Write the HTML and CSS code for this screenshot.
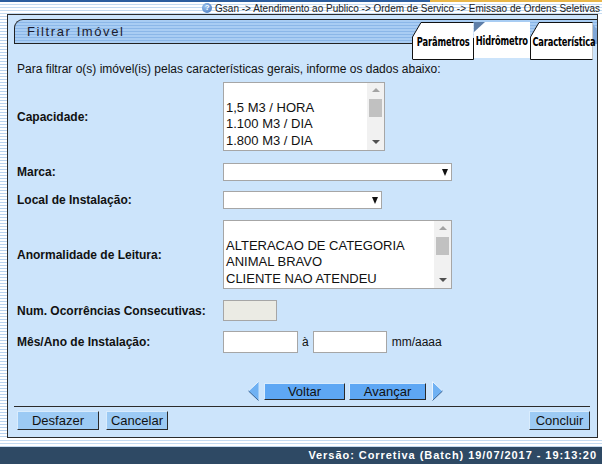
FILE: index.html
```html
<!DOCTYPE html>
<html lang="pt-BR">
<head>
<meta charset="utf-8">
<title>Filtrar Imóvel</title>
<link rel="stylesheet" href="styles.css">
</head>
<body>
<div class="top">
  <div class="crumbs">
    <span class="help">?</span>
    <span>Gsan -&gt; Atendimento ao Publico -&gt; Ordem de Servico -&gt; Emissao de Ordens Seletivas</span>
  </div>
</div>
<div class="mid">
  <div class="strip"></div>
  <div class="panel">
    <div class="title">
      <span class="title-text">Filtrar Imóvel</span>
      <div class="tabs">
        <div class="tab tab1">
          <svg class="tabshape" width="62" height="38" viewBox="0 0 62 38">
            <polygon points="0.5,15 9,0.5 61.5,0.5 61.5,37.5 0.5,37.5" fill="#fff"/>
            <polyline points="0.5,37 0.5,15 9,0.5 61.5,0.5" fill="none" stroke="#111" stroke-width="1"/>
            <polyline points="61.5,16 61.5,37.5 0.5,37.5" fill="none" stroke="#111" stroke-width="1"/>
          </svg>
          <span class="tab-label">Parâmetros</span>
        </div>
        <div class="tab tab2">
          <svg class="tabshape" width="56" height="36" viewBox="0 0 56 36">
            <rect x="0" y="0" width="56" height="36" fill="#fff"/>
            <polygon points="0,0 11,0 0,10" fill="#5e7ea8"/>
          </svg>
          <span class="tab-label">Hidrômetro</span>
        </div>
        <div class="tab tab3">
          <svg class="tabshape" width="68" height="38" viewBox="0 0 68 38">
            <polygon points="0.5,15 9,0.5 62.5,0.5 62.5,37.5 0.5,37.5" fill="#fff"/>
            <polyline points="62.5,37.5 0.5,37.5 0.5,15 9,0.5 62.5,0.5" fill="none" stroke="#111" stroke-width="1"/>
            <line x1="62.5" y1="1" x2="62.5" y2="37" stroke="#c8c8c8" stroke-width="1"/>
            <polygon points="63,2 67,8 67,22 63,22" fill="#7fa6d6"/>
          </svg>
          <span class="tab-label">Característica</span>
        </div>
      </div>
    </div>

    <div class="form">
      <p class="intro">Para filtrar o(s) imóvel(is) pelas características gerais, informe os dados abaixo:</p>

      <div class="row row-cap">
        <div class="label">Capacidade:</div>
        <div class="listbox lb-cap">
          <div class="items">
            <div class="item">&nbsp;</div>
            <div class="item">1,5 M3 / HORA</div>
            <div class="item">1.100 M3 / DIA</div>
            <div class="item">1.800 M3 / DIA</div>
          </div>
          <div class="sbar">
            <span class="arr-up"></span>
            <span class="thumb"></span>
            <span class="spacer"></span>
            <span class="arr-down"></span>
          </div>
        </div>
      </div>

      <div class="row row-marca">
        <div class="label">Marca:</div>
        <div class="select sel-marca"><span class="caret"></span></div>
      </div>

      <div class="row row-local">
        <div class="label">Local de Instalação:</div>
        <div class="select sel-local"><span class="caret"></span></div>
      </div>

      <div class="row row-anorm">
        <div class="label">Anormalidade de Leitura:</div>
        <div class="listbox lb-anorm">
          <div class="items">
            <div class="item">&nbsp;</div>
            <div class="item">ALTERACAO DE CATEGORIA</div>
            <div class="item">ANIMAL BRAVO</div>
            <div class="item">CLIENTE NAO ATENDEU</div>
          </div>
          <div class="sbar">
            <span class="arr-up"></span>
            <span class="thumb"></span>
            <span class="spacer"></span>
            <span class="arr-down"></span>
          </div>
        </div>
      </div>

      <div class="row row-num">
        <div class="label">Num. Ocorrências Consecutivas:</div>
        <div class="input input-num"></div>
      </div>

      <div class="row row-mes">
        <div class="label">Mês/Ano de Instalação:</div>
        <div class="dates">
          <div class="input input-d1"></div>
          <span class="a">à</span>
          <div class="input input-d2"></div>
          <span class="fmt">mm/aaaa</span>
        </div>
      </div>

      <div class="nav">
        <svg class="arrow" width="11" height="20" viewBox="0 0 11 20">
          <polygon points="10.5,0.5 0.5,10 10.5,19.5" fill="#6fb1f3"/>
          <polyline points="10.5,0.5 0.5,10" fill="none" stroke="#e8f3fe" stroke-width="1"/>
          <polyline points="0.5,10 10.5,19.5" fill="none" stroke="#3a6290" stroke-width="1"/>
        </svg>
        <div class="btn btn-nav btn-voltar">Voltar</div>
        <div class="btn btn-nav btn-avancar">Avançar</div>
        <svg class="arrow" width="11" height="20" viewBox="0 0 11 20">
          <polygon points="0.5,0.5 10.5,10 0.5,19.5" fill="#6fb1f3"/>
          <polyline points="0.5,19.5 0.5,0.5 10.5,10" fill="none" stroke="#e8f3fe" stroke-width="1"/>
          <polyline points="10.5,10 0.5,19.5" fill="none" stroke="#3a6290" stroke-width="1"/>
        </svg>
      </div>
    </div>

    <div class="actions">
      <div class="left-actions">
        <div class="btn btn-act btn-desfazer">Desfazer</div>
        <div class="btn btn-act btn-cancelar">Cancelar</div>
      </div>
      <div class="btn btn-act btn-concluir">Concluir</div>
    </div>
  </div>
</div>
<div class="bottom-stripes"></div>
<div class="footer">Versão: Corretiva (Batch) 19/07/2017 - 19:13:20</div>
</body>
</html>
```

FILE: styles.css
```css
html, body {
  margin: 0;
  padding: 0;
}
body {
  width: 602px;
  height: 464px;
  overflow: hidden;
  font-family: "Liberation Sans", Arial, sans-serif;
  font-size: 12px;
  color: #111;
  background: #fff;
}

.top {
  height: 14px;
  box-sizing: border-box;
  border-top: 2px solid #2d5e9e;
  background: repeating-linear-gradient(to bottom, #ffffff 0 2px, #c5dbf1 2px 3px);
  position: relative;
  display: flex;
  justify-content: flex-end;
  align-items: center;
}
.top::before {
  content: "";
  position: absolute;
  top: -2px;
  left: 430px;
  right: 0;
  height: 2px;
  background: #e8b64a;
}
.crumbs {
  display: flex;
  align-items: center;
  gap: 3px;
  font-size: 10px;
  color: #222;
  padding-right: 2px;
  line-height: 11px;
  white-space: nowrap;
}
.help {
  width: 10px;
  height: 10px;
  border-radius: 50%;
  background: radial-gradient(circle at 35% 35%, #9cc3ef, #3b6fb8);
  color: #fff;
  font-size: 8px;
  font-weight: bold;
  line-height: 10px;
  text-align: center;
}

.mid {
  display: flex;
  height: 424px;
}
.strip {
  width: 7px;
  flex: none;
  background: repeating-linear-gradient(to bottom, #ffffff 0 2px, #b9d2ee 2px 3px);
}
.panel {
  width: 591px;
  flex: none;
  box-sizing: border-box;
  border: 1px solid #2b2b2b;
  background: #cce4fb;
  display: flex;
  flex-direction: column;
}

.title {
  position: relative;
  margin: 4px 0 0 6px;
  height: 25px;
  box-sizing: border-box;
  border: 1px solid #222;
  border-right: none;
  border-top-left-radius: 9px;
  background: repeating-linear-gradient(to bottom, #a9cdf3 0 2px, #8bb7e8 2px 3px);
  display: flex;
  align-items: center;
  padding-left: 12px;
}
.title-text {
  font-size: 13px;
  letter-spacing: 1.6px;
  color: #1b1b2e;
}
.tabs {
  position: absolute;
  top: 2px;
  left: 397px;
  display: flex;
  align-items: flex-start;
}
.tab {
  position: relative;
  display: flex;
  align-items: center;
  justify-content: center;
  height: 38px;
}
.tabshape {
  position: absolute;
  top: 0;
  left: 0;
}
.tab-label {
  position: relative;
  font-family: "DejaVu Sans Condensed", "DejaVu Sans", sans-serif;
  font-stretch: condensed;
  font-weight: bold;
  font-size: 12px;
  letter-spacing: -0.2px;
  color: #000;
  padding-top: 1px;
  transform: scaleX(0.77);
  white-space: nowrap;
}
.tab1 { width: 62px; }
.tab2 { width: 56px; height: 36px; }
.tab3 { width: 63px; padding-right: 5px; }
.tab3 .tab-label { margin-right: -5px; }

.form {
  padding-left: 9px;
  display: flex;
  flex-direction: column;
}
.intro {
  margin: 18px 0 0 0;
  line-height: 14px;
  font-size: 12px;
  color: #111;
}
.row {
  display: grid;
  grid-template-columns: 206px auto;
  align-items: center;
  justify-items: start;
}
.label {
  font-weight: bold;
  font-size: 12px;
  color: #111;
}
.row-cap { margin-top: 6px; }
.row-marca { margin-top: 12px; }
.row-local { margin-top: 10px; }
.row-anorm { margin-top: 11px; }
.row-num { margin-top: 11px; }
.row-mes { margin-top: 10px; }

.listbox {
  display: flex;
  height: 69px;
  box-sizing: border-box;
  border: 1px solid #a6a6a6;
  background: #fff;
}
.lb-cap { width: 162px; }
.lb-anorm { width: 229px; }
.items {
  flex: 1;
  padding-left: 2px;
  font-size: 13px;
  line-height: 16.7px;
  color: #111;
  white-space: nowrap;
  overflow: hidden;
}
.sbar {
  width: 17px;
  flex: none;
  background: #f1f1f1;
  display: flex;
  flex-direction: column;
  align-items: center;
}
.arr-up {
  margin-top: 5px;
  width: 0;
  height: 0;
  border-left: 4px solid transparent;
  border-right: 4px solid transparent;
  border-bottom: 4px solid #a3a3a3;
}
.thumb {
  margin-top: 7px;
  width: 13px;
  height: 18px;
  background: #c1c1c1;
}
.spacer { flex: 1; }
.arr-down {
  margin-bottom: 6px;
  width: 0;
  height: 0;
  border-left: 4px solid transparent;
  border-right: 4px solid transparent;
  border-top: 4px solid #505050;
}

.select {
  height: 18px;
  box-sizing: border-box;
  border: 1px solid #a6a6a6;
  background: #fff;
  display: flex;
  justify-content: flex-end;
  align-items: center;
  padding-right: 3px;
}
.sel-marca { width: 229px; }
.sel-local { width: 159px; }
.caret {
  width: 0;
  height: 0;
  border-left: 3.5px solid transparent;
  border-right: 3.5px solid transparent;
  border-top: 7px solid #111;
}

.input {
  box-sizing: border-box;
  border: 1px solid #a6a6a6;
  background: #fff;
}
.input-num {
  width: 54px;
  height: 21px;
  background: #ebebe4;
}
.dates {
  display: flex;
  align-items: center;
}
.input-d1 { width: 75px; height: 22px; }
.input-d2 { width: 74px; height: 22px; }
.a { margin: 0 4px 0 4px; font-size: 12px; }
.fmt { margin-left: 5px; font-size: 12px; }

.nav {
  margin-top: 28px;
  margin-left: 231px;
  height: 20px;
  display: flex;
  align-items: center;
}
.arrow { flex: none; }
.btn {
  box-sizing: border-box;
  display: flex;
  align-items: center;
  justify-content: center;
  font-size: 13px;
  color: #111;
  border-style: solid;
  border-width: 1px;
  border-color: #d9ecfd #2a2a2a #2a2a2a #d9ecfd;
}
.btn-nav {
  height: 17px;
  background: #5ea7f4;
}
.btn-voltar { width: 81px; margin-left: 5px; }
.btn-avancar { width: 77px; margin-left: 4px; margin-right: 6px; }

.actions {
  margin: 5px 7px 0 6px;
  border-top: 1px solid #2b2b2b;
  padding: 4px 0 0 3px;
  display: flex;
  justify-content: space-between;
  align-items: flex-start;
}
.left-actions {
  display: flex;
  gap: 7px;
}
.btn-act {
  height: 19px;
  background: #9ccaf4;
}
.btn-desfazer { width: 82px; }
.btn-cancelar { width: 62px; }
.btn-concluir { width: 61px; }

.bottom-stripes {
  height: 9px;
  background: repeating-linear-gradient(to bottom, #ffffff 0 2px, #c5dbf1 2px 3px);
}
.footer {
  height: 17px;
  background: #2e4964;
  color: #fff;
  font-weight: bold;
  font-size: 11px;
  letter-spacing: 0.95px;
  line-height: 17px;
  text-align: right;
  padding-right: 5px;
  white-space: nowrap;
}
```
